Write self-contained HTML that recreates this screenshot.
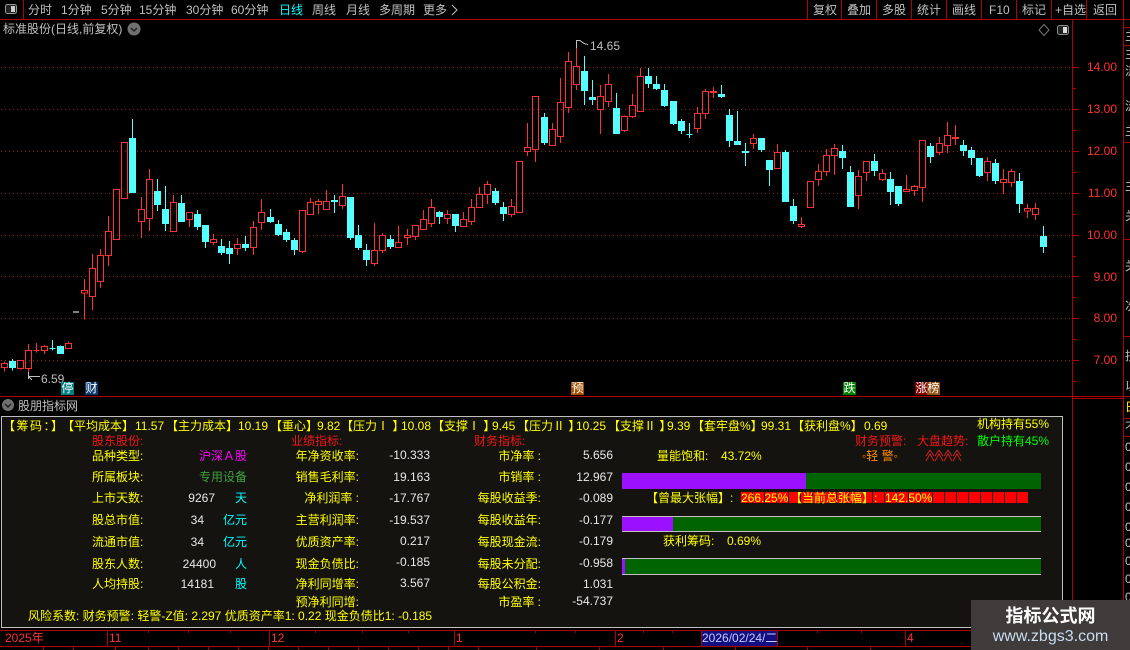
<!DOCTYPE html>
<html><head><meta charset="utf-8">
<style>
html,body{margin:0;padding:0;background:#000}
#r{position:relative;width:1130px;height:650px;overflow:hidden;background:#000;font:12px/12px "Liberation Sans","WenQuanYi Zen Hei","Noto Sans CJK SC",sans-serif;color:#ff0}
#r span{position:absolute;white-space:nowrap}
.g{color:#c0c0c0}
.w{color:#e8e8e8}
.c{color:#00ffff}
.r{color:#f01818}
.a{color:#ff3232}
.l{position:absolute;background:#b00000}
.b{position:absolute;text-align:center;color:#fff;width:13px;height:13px;top:382px;line-height:13px}
svg{position:absolute;left:0;top:0}
</style></head><body><div id="r">

<svg width="1130" height="650" shape-rendering="crispEdges">
<g stroke="#8c2020" stroke-dasharray="1 3" stroke-width="1">
<path d="M1 67.5H1072M1 109.5H1072M1 151.5H1072M1 193.5H1072M1 235.5H1072M1 276.5H1072M1 318.5H1072M1 360.5H1072"/>
</g>
<path stroke="#b00000" fill="none" d="M1072.5 67.5H1079M1072.5 88.5H1076M1072.5 109.5H1079M1072.5 130.5H1076M1072.5 151.5H1079M1072.5 172.5H1076M1072.5 193.5H1079M1072.5 214.5H1076M1072.5 235.5H1079M1072.5 256.5H1076M1072.5 276.5H1079M1072.5 297.5H1076M1072.5 318.5H1079M1072.5 339.5H1076M1072.5 360.5H1079M1072.5 381.5H1076"/>

<g transform="translate(0,100) scale(.33333)" stroke-width="3">
<path fill="none" stroke="#ff3232" d="M13 785V790M13 803V815M4 791H22V802H4ZM52 782H70V805H52ZM61 806V808M85 732V751M85 806V830M76 752H94V805H76ZM109 729V758M100 751H118M133 735V739M133 752V762M124 740H142V751H124ZM205 724V730M196 731H214V745H196ZM253 537V571M253 580V659M244 572H262V579H244ZM277 462V505M277 590V630M268 506H286V589H268ZM301 447V466M301 545V564M292 467H310V544H292ZM325 348V394M325 467V498M316 395H334V466H316ZM340 269H358V418H340ZM364 128H382V295H364ZM424 291V328M424 365V414M415 329H433V364H415ZM448 207V238M448 356V393M439 239H457V355H439ZM520 285V307M511 308H529V394H511ZM568 359V381M559 338H577V358H559ZM640 402V418M640 428V435M631 419H649V427H631ZM712 414V433M712 446V465M703 434H721V445H703ZM760 363V382M760 443V465M751 383H769V442H751ZM784 297V337M784 368V390M775 338H793V367H775Z"/>
<path fill="#55ffff" stroke="#55ffff" d="M37 777V812M28 784H46V803H28ZM157 720V752M148 746H166M181 736V740M172 740H190V761H172ZM397 57V115M388 115H406V277H388ZM472 237V333M463 274H481V314H463ZM496 258V393M487 328H505V371H487ZM544 285V310M535 310H553V365H535ZM592 330V390M583 343H601V380H583ZM616 426V444M607 376H625V425H607ZM664 417V465M655 439H673V458H655ZM688 423V492M679 445H697V461H679ZM736 408V453M727 433H745V443H727ZM811 327V369M802 352H820V365H802ZM835 360V408M826 373H844V404H826Z"/>
<path stroke="#fff" fill="none" d="M219 636H237"/>
</g>

<g transform="translate(280,100) scale(.33333)" stroke-width="3">
<path fill="none" stroke="#ff3232" d="M58 332H76V455H58ZM67 456V459M91 294V307M82 308H100V344H82ZM115 297V304M115 315V342M106 305H124V314H106ZM139 270V304M130 305H148V329H130ZM187 252V289M187 318V327M178 290H196V317H178ZM283 369V451M283 492V498M274 452H292V491H274ZM307 399V405M307 453V459M298 406H316V452H298ZM355 378V427M346 428H364V443H346ZM382 387V405M382 414V435M373 406H391V413H373ZM406 411V420M397 377H415V410H397ZM430 330V358M421 359H439V389H421ZM454 297V322M454 372V381M445 323H463V371H445ZM502 330V343M502 357V372M493 344H511V356H493ZM550 336V358M541 359H559V380H541ZM574 297V322M574 366V375M565 323H583V365H565ZM598 261V283M589 284H607V323H589ZM622 243V253M622 285V312M613 254H631V284H613ZM694 297V319M694 345V351M685 320H703V344H685ZM709 185H727V338H709Z"/>
<path fill="#55ffff" stroke="#55ffff" d="M19 387V426M10 397H28V419H10ZM43 414V465M34 421H52V449H34ZM163 285V339M154 301H172V305H154ZM211 414V420M202 292H220V413H202ZM235 375V450M226 406H244V443H226ZM259 432V498M250 451H268V479H250ZM331 405V447M322 418H340V440H322ZM478 333V372M469 337H487V350H469ZM526 378V396M517 343H535V377H517ZM646 264V315M637 274H655V308H637ZM670 306V363M661 322H679V341H661Z"/>
</g>

<g transform="translate(520,30) scale(.33333)" stroke-width="3">
<path fill="none" stroke="#ff3232" d="M22 279V352M22 365V378M13 353H31V364H13ZM46 359V396M37 200H55V358H37ZM97 279V298M88 299H106V347H88ZM121 144V217M121 320V339M112 218H130V319H112ZM145 66V94M145 234V249M136 95H154V233H136ZM169 30V109M169 164V180M160 110H178V163H160ZM241 165V199M241 239V312M232 200H250V238H232ZM265 132V163M265 216V231M256 164H274V215H256ZM313 256V259M313 303V306M304 260H322V302H304ZM337 192V226M337 261V264M328 227H346V260H328ZM361 114V139M352 140H370V245H352ZM532 231V250M532 297V309M523 251H541V296H523ZM556 177V184M556 251V267M547 185H565V250H547ZM580 171V204M571 185H589V187H571ZM700 312V325M700 342V357M691 326H709V341H691ZM772 342V367M763 368H781V416H763Z"/>
<path fill="#55ffff" stroke="#55ffff" d="M73 249V345M64 262H82V338H64ZM193 78V225M184 124H202V182H184ZM217 150V225M208 202H226V209H208ZM289 189V235M280 235H298V311H280ZM385 114V174M376 139H394V161H376ZM409 138V180M400 163H418V176H400ZM433 162V231M424 181H442V227H424ZM460 282V285M451 214H469V281H451ZM484 267V312M475 274H493V302H475ZM508 279V324M499 313H517M604 165V204M595 193H613V200H595ZM628 237V351M619 256H637V332H619ZM652 243V345M643 334H661V344H643ZM676 339V408M667 365H685V367H667ZM724 360V366M715 325H733V359H715ZM748 420V468M739 391H757V419H739ZM796 360V367M787 367H805V515H787Z"/>
</g>

<g transform="translate(780,100) scale(.33333)" stroke-width="3">
<path fill="none" stroke="#ff3232" d="M64 351V373M64 381V384M55 374H73V380H55ZM82 245H100V322H82ZM115 192V214M115 239V258M106 215H124V238H106ZM139 147V166M139 215V228M130 167H148V214H130ZM163 132V145M163 167V225M154 146H172V166H154ZM235 210V229M235 287V327M226 230H244V286H226ZM259 218V243M250 184H268V217H250ZM307 207V220M307 240V243M298 221H316V239H298ZM379 225V268M370 269H388V274H370ZM403 255V259M403 272V288M394 260H412V271H394ZM427 263V306M418 122H436V262H418ZM478 111V130M478 159V165M469 131H487V158H469ZM502 66V106M502 137V159M493 107H511V136H493ZM526 75V135M517 113H535V115H517ZM622 171V184M622 218V243M613 185H631V217H613ZM670 207V238M670 248V282M661 239H679V247H661ZM694 207V214M694 248V261M685 215H703V247H685ZM742 312V325M742 334V354M733 326H751V333H733ZM766 309V325M766 344V360M757 326H775V343H757Z"/>
<path fill="#55ffff" stroke="#55ffff" d="M40 297V372M31 319H49V362H31ZM187 135V207M178 154H196V173H178ZM211 198V217M202 217H220V320H202ZM283 162V228M274 184H292V212H274ZM331 216V315M322 238H340V275H322ZM355 312V318M346 259H364V311H346ZM451 129V189M442 139H460V170H442ZM550 120V168M541 136H559V152H541ZM574 141V195M565 151H583V173H565ZM598 228V231M589 175H607V227H589ZM646 177V252M637 190H655V242H637ZM718 219V339M709 244H727V311H709ZM790 378V459M781 409H799V440H781Z"/>
</g>
<path fill="none" stroke="#c0c0c0" d="M28.500 372V379M28.500 376.500H40M28.500 376.500L32 380M576.500 40V48M576.500 40.500H580L584 43.500L588 44.500"/>
</svg>

<!-- frame lines -->
<div class="l" style="left:0;top:19px;width:1130px;height:1px"></div>
<div class="l" style="left:23px;top:0;width:1px;height:19px"></div>
<div class="l" style="left:807px;top:0;width:1px;height:19px"></div>
<div class="l" style="left:841px;top:0;width:1px;height:19px"></div>
<div class="l" style="left:876px;top:0;width:1px;height:19px"></div>
<div class="l" style="left:911px;top:0;width:1px;height:19px"></div>
<div class="l" style="left:946px;top:0;width:1px;height:19px"></div>
<div class="l" style="left:981px;top:0;width:1px;height:19px"></div>
<div class="l" style="left:1016px;top:0;width:1px;height:19px"></div>
<div class="l" style="left:1051px;top:0;width:1px;height:19px"></div>
<div class="l" style="left:1086px;top:0;width:1px;height:19px"></div>
<div class="l" style="left:1123px;top:0;width:1px;height:650px"></div>
<div class="l" style="left:1072px;top:19px;width:1px;height:631px"></div>
<div class="l" style="left:0;top:396px;width:1123px;height:1px"></div>
<div class="l" style="left:1072px;top:398px;width:51px;height:1px"></div>
<div class="l" style="left:0;top:630px;width:1123px;height:1px"></div>
<div class="l" style="left:0;top:646px;width:1123px;height:1px"></div>
<div class="l" style="left:1123px;top:27px;width:7px;height:1px"></div>
<div class="l" style="left:1123px;top:45px;width:7px;height:1px"></div>
<div class="l" style="left:1123px;top:142px;width:7px;height:1px"></div>
<div class="l" style="left:1123px;top:239px;width:7px;height:1px"></div>
<div class="l" style="left:1123px;top:336px;width:7px;height:1px"></div>
<div class="l" style="left:1123px;top:396px;width:7px;height:1px"></div>
<div class="l" style="left:1123px;top:418px;width:7px;height:1px"></div>
<div class="l" style="left:1123px;top:436px;width:7px;height:1px"></div>

<!-- toolbar -->
<svg width="24" height="19" style="left:0;top:0"><rect x="5.500" y="4.500" width="11" height="9" rx="2" fill="#222" stroke="#999"/><rect x="11" y="6" width="4" height="6" fill="#ccc"/></svg>
<span class="g" style="left:28px;top:4px">分时</span>
<span class="g" style="left:61px;top:4px">1分钟</span>
<span class="g" style="left:101px;top:4px">5分钟</span>
<span class="g" style="left:139px;top:4px">15分钟</span>
<span class="g" style="left:186px;top:4px">30分钟</span>
<span class="g" style="left:231px;top:4px">60分钟</span>
<span class="c" style="left:279px;top:4px">日线</span>
<span class="g" style="left:312px;top:4px">周线</span>
<span class="g" style="left:346px;top:4px">月线</span>
<span class="g" style="left:379px;top:4px">多周期</span>
<span class="g" style="left:423px;top:4px">更多</span>
<svg width="10" height="12" style="left:450px;top:4px"><path d="M2 1L7 6L2 11" fill="none" stroke="#c0c0c0"/></svg>
<span class="g" style="left:813px;top:4px">复权</span>
<span class="g" style="left:847px;top:4px">叠加</span>
<span class="g" style="left:882px;top:4px">多股</span>
<span class="g" style="left:917px;top:4px">统计</span>
<span class="g" style="left:952px;top:4px">画线</span>
<span class="g" style="left:989px;top:4px">F10</span>
<span class="g" style="left:1022px;top:4px">标记</span>
<span class="g" style="left:1055px;top:4px">+自选</span>
<span class="g" style="left:1093px;top:4px">返回</span>

<!-- title -->
<span class="g" style="left:3px;top:23px">标准股份(日线,前复权)</span>
<svg width="16" height="16" style="left:126px;top:21px"><circle cx="8" cy="8" r="6.500" fill="#707070"/><path d="M5 7L8 10L11 7" fill="none" stroke="#222" stroke-width="1.500"/></svg>
<svg width="14" height="14" style="left:1037px;top:23px"><path d="M7 1.500L12 7L7 12.500L2 7Z" fill="none" stroke="#777"/></svg>
<svg width="14" height="14" style="left:1057px;top:23px"><rect x=".5" y="2.500" width="11" height="9" rx="2" fill="#222" stroke="#888"/><rect x="6" y="4" width="4" height="6" fill="#ddd"/></svg>

<!-- chart labels -->
<span class="g" style="left:590px;top:40px">14.65</span>
<span class="g" style="left:41px;top:373px">6.59</span>
<span class="a" style="right:13px;top:61px">14.00</span>
<span class="a" style="right:13px;top:103px">13.00</span>
<span class="a" style="right:13px;top:145px">12.00</span>
<span class="a" style="right:13px;top:187px">11.00</span>
<span class="a" style="right:13px;top:229px">10.00</span>
<span class="a" style="right:13px;top:271px">9.00</span>
<span class="a" style="right:13px;top:312px">8.00</span>
<span class="a" style="right:13px;top:354px">7.00</span>

<span class="b" style="left:61px;background:#008080">停</span>
<span class="b" style="left:85px;background:#0a3a70">财</span>
<span class="b" style="left:571px;background:#a05000">预</span>
<span class="b" style="left:843px;background:#008000">跌</span>
<span class="b" style="left:915px;background:#800000">涨</span>
<span class="b" style="left:927px;background:#905010">榜</span>

<!-- panel header -->
<svg width="16" height="16" style="left:0;top:397px"><circle cx="8" cy="8" r="6" fill="#707070"/><path d="M5 7L8 10L11 7" fill="none" stroke="#222" stroke-width="1.500"/></svg>
<span class="g" style="left:18px;top:400px">股朋指标网</span>

<!-- panel -->
<div style="position:absolute;left:1px;top:416px;width:1060px;height:210px;border:1px solid #c0c0c0;background:#14130f"></div>

<span style="left:3px;top:420px;letter-spacing:1.500px">【筹码：】</span>
<span style="left:62px;top:420px">【平均成本】</span>
<span style="left:135px;top:420px">11.57</span>
<span style="left:166px;top:420px">【主力成本】</span>
<span style="left:238px;top:420px">10.19</span>
<span style="left:270px;top:420px">【重心】</span>
<span style="left:317px;top:420px">9.82</span>
<span style="left:341px;top:420px">【压力Ⅰ 】</span>
<span style="left:401px;top:420px">10.08</span>
<span style="left:432px;top:420px">【支撑Ⅰ 】</span>
<span style="left:492px;top:420px">9.45</span>
<span style="left:517px;top:420px">【压力Ⅱ 】</span>
<span style="left:576px;top:420px">10.25</span>
<span style="left:608px;top:420px">【支撑Ⅱ 】</span>
<span style="left:667px;top:420px">9.39</span>
<span style="left:692px;top:420px">【套牢盘%】</span>
<span style="left:761px;top:420px">99.31</span>
<span style="left:792px;top:420px">【获利盘%】</span>
<span style="left:864px;top:420px">0.69</span>
<span style="left:977px;top:418px">机构持有55%</span>

<span class="r" style="left:92px;top:435px">股东股份:</span>
<span class="r" style="left:291px;top:435px">业绩指标:</span>
<span class="r" style="left:474px;top:435px">财务指标:</span>
<span class="r" style="left:855px;top:435px">财务预警:</span>
<span class="r" style="left:917px;top:435px">大盘趋势:</span>
<span style="left:977px;top:435px;color:#00ff00">散户持有45%</span>

<span style="left:92px;top:450px">品种类型:</span>
<span style="left:92px;top:471px">所属板块:</span>
<span style="left:92px;top:492px">上市天数:</span>
<span style="left:92px;top:514px">股总市值:</span>
<span style="left:92px;top:536px">流通市值:</span>
<span style="left:92px;top:558px">股东人数:</span>
<span style="left:92px;top:578px">人均持股:</span>

<span style="right:883px;top:450px;color:#ff00ff">沪深Ａ股</span>
<span style="right:883px;top:471px;color:#40a040">专用设备</span>
<span class="w" style="right:915px;top:492px">9267</span>
<span class="c" style="right:883px;top:492px">天</span>
<span class="w" style="right:926px;top:514px">34</span>
<span class="c" style="right:883px;top:514px">亿元</span>
<span class="w" style="right:926px;top:536px">34</span>
<span class="c" style="right:883px;top:536px">亿元</span>
<span class="w" style="right:914px;top:558px">24400</span>
<span class="c" style="right:883px;top:558px">人</span>
<span class="w" style="right:916px;top:578px">14181</span>
<span class="c" style="right:883px;top:578px">股</span>

<span style="right:771px;top:450px">年净资收率:</span>
<span style="right:771px;top:471px">销售毛利率:</span>
<span style="right:771px;top:492px">净利润率 :</span>
<span style="right:771px;top:514px">主营利润率:</span>
<span style="right:771px;top:536px">优质资产率:</span>
<span style="right:771px;top:558px">现金负债比:</span>
<span style="right:771px;top:578px">净利同增率:</span>
<span style="right:771px;top:596px">预净利同增:</span>

<span class="w" style="right:700px;top:449px">-10.333</span>
<span class="w" style="right:700px;top:471px">19.163</span>
<span class="w" style="right:700px;top:492px">-17.767</span>
<span class="w" style="right:700px;top:514px">-19.537</span>
<span class="w" style="right:700px;top:535px">0.217</span>
<span class="w" style="right:700px;top:556px">-0.185</span>
<span class="w" style="right:700px;top:577px">3.567</span>

<span style="right:589px;top:450px">市净率 :</span>
<span style="right:589px;top:471px">市销率 :</span>
<span style="right:589px;top:492px">每股收益季:</span>
<span style="right:589px;top:514px">每股收益年:</span>
<span style="right:589px;top:536px">每股现金流:</span>
<span style="right:589px;top:558px">每股未分配:</span>
<span style="right:589px;top:578px">每股公积金:</span>
<span style="right:589px;top:596px">市盈率 :</span>

<span class="w" style="right:517px;top:449px">5.656</span>
<span class="w" style="right:517px;top:471px">12.967</span>
<span class="w" style="right:517px;top:492px">-0.089</span>
<span class="w" style="right:517px;top:514px">-0.177</span>
<span class="w" style="right:517px;top:535px">-0.179</span>
<span class="w" style="right:517px;top:557px">-0.958</span>
<span class="w" style="right:517px;top:578px">1.031</span>
<span class="w" style="right:517px;top:595px">-54.737</span>

<span style="left:657px;top:450px">量能饱和:</span>
<span style="left:721px;top:450px">43.72%</span>
<span style="left:663px;top:535px">获利筹码:</span>
<span style="left:727px;top:535px">0.69%</span>

<span style="left:862px;top:450px;color:#ff8c00">◦轻 警◦</span>
<svg width="40" height="14" style="left:925px;top:449px"><path fill="none" stroke="#d02020" d="M1 7L5 1L9 7M1 12L5 5L9 12M10 7L14 1L18 7M10 12L14 5L18 12M19 7L23 1L27 7M19 12L23 5L27 12M28 7L32 1L36 7M28 12L32 5L36 12"/></svg>

<!-- bars -->
<div style="position:absolute;left:622px;top:473px;width:419px;height:16px;background:#006400"><div style="width:184px;height:16px;background:#9a10ff"></div></div>
<div style="position:absolute;left:622px;top:516px;width:419px;height:14px;background:#006400;border-top:1px solid #c0c0c0;border-bottom:1px solid #c0c0c0"><div style="width:51px;height:14px;background:#9a10ff"></div></div>
<div style="position:absolute;left:622px;top:558px;width:419px;height:15px;background:#006400;border-top:1px solid #c0c0c0;border-bottom:1px solid #c0c0c0"><div style="width:3px;height:15px;background:#9a10ff"></div></div>

<div style="position:absolute;left:741px;top:492px;width:287px;height:11px;background:repeating-linear-gradient(90deg,#f00 0,#f00 11px,transparent 11px,transparent 12px)"></div>
<span style="left:646px;top:492px">【曾最大张幅】:</span>
<span style="left:741px;top:492px">266.25%</span>
<span style="left:790px;top:492px">【当前总张幅】:</span>
<span style="left:885px;top:492px">142.50%</span>

<span style="left:28px;top:610px">风险系数: 财务预警: 轻警-Z值: 2.297 优质资产率1: 0.22 现金负债比1: -0.185</span>

<!-- time axis -->
<span class="a" style="left:5px;top:632px">2025年</span>
<span class="a" style="left:109px;top:632px">11</span>
<span class="a" style="left:271px;top:632px">12</span>
<span class="a" style="left:456px;top:632px">1</span>
<span class="a" style="left:617px;top:632px">2</span>
<span class="a" style="left:907px;top:632px">4</span>
<div class="l" style="left:107px;top:630px;width:1px;height:16px"></div>
<div class="l" style="left:269px;top:630px;width:1px;height:16px"></div>
<div class="l" style="left:454px;top:630px;width:1px;height:16px"></div>
<div class="l" style="left:615px;top:630px;width:1px;height:16px"></div>
<div class="l" style="left:905px;top:630px;width:1px;height:16px"></div>
<svg width="1130" height="650" shape-rendering="crispEdges"><path fill="none" stroke="#b00000" d="M148.500 630V633M188.500 630V633M230.500 630V633M315.500 630V633M362.500 630V633M408.500 630V633M535.500 630V633M575.500 630V633M643.500 630V633M672.500 630V633M817.500 630V633M861.500 630V633M43.500 646V650M73.500 646V650M115.500 646V650M148.500 646V650M178.500 646V650M208.500 646V650M238.500 646V650M268.500 646V650M298.500 646V650M328.500 646V650M358.500 646V650M388.500 646V650M418.500 646V650M448.500 646V650M478.500 646V650M536.500 646V650M599.500 646V650M663.500 646V650M735.500 646V650M807.500 646V650M870.500 646V650"/></svg>
<span style="left:701px;top:631px;width:77px;height:15px;background:#101080;color:#c8c8ff;line-height:15px;text-align:center;box-sizing:border-box;border-left:1px solid #b00000;border-right:1px solid #b00000">2026/02/24/二</span>

<!-- clipped right column -->
<div style="position:absolute;left:1124px;top:0;width:6px;height:650px;overflow:hidden;color:#c0c0c0">
<span style="left:1px;top:30px">主</span>
<span style="left:1px;top:48px">主</span>
<span style="left:1px;top:65px">流</span>
<span style="left:1px;top:100px">流</span>
<span style="left:1px;top:125px">主</span>
<span style="left:1px;top:180px">主</span>
<span style="left:1px;top:210px">关</span>
<span style="left:1px;top:260px">关</span>
<span style="left:1px;top:300px">次</span>
<span style="left:1px;top:350px">技</span>
<span style="left:1px;top:380px">以</span>
<span style="left:1px;top:401px;color:#ff0">日</span>
<span style="left:1px;top:421px">不</span>
<span style="left:1px;top:441px">0</span>
<span style="left:1px;top:461px">0</span>
<span style="left:1px;top:481px">0</span>
<span style="left:1px;top:501px">0</span>
<span style="left:1px;top:521px">0</span>
<span style="left:1px;top:537px">0</span>
<span style="left:1px;top:555px">0</span>
<span style="left:1px;top:573px">0</span>
<span style="left:1px;top:591px">0</span>
</div>

<!-- watermark -->
<div style="position:absolute;left:971px;top:600px;width:159px;height:50px;background:#3f3b3b"></div>
<span style="left:971px;width:159px;text-align:center;top:606px;font-size:18px;line-height:20px;font-weight:bold;color:#fff">指标公式网</span>
<span style="left:971px;width:159px;text-align:center;top:628px;font-size:16px;line-height:18px;color:#c8ddf0">www.zbgs3.com</span>

</div></body></html>
